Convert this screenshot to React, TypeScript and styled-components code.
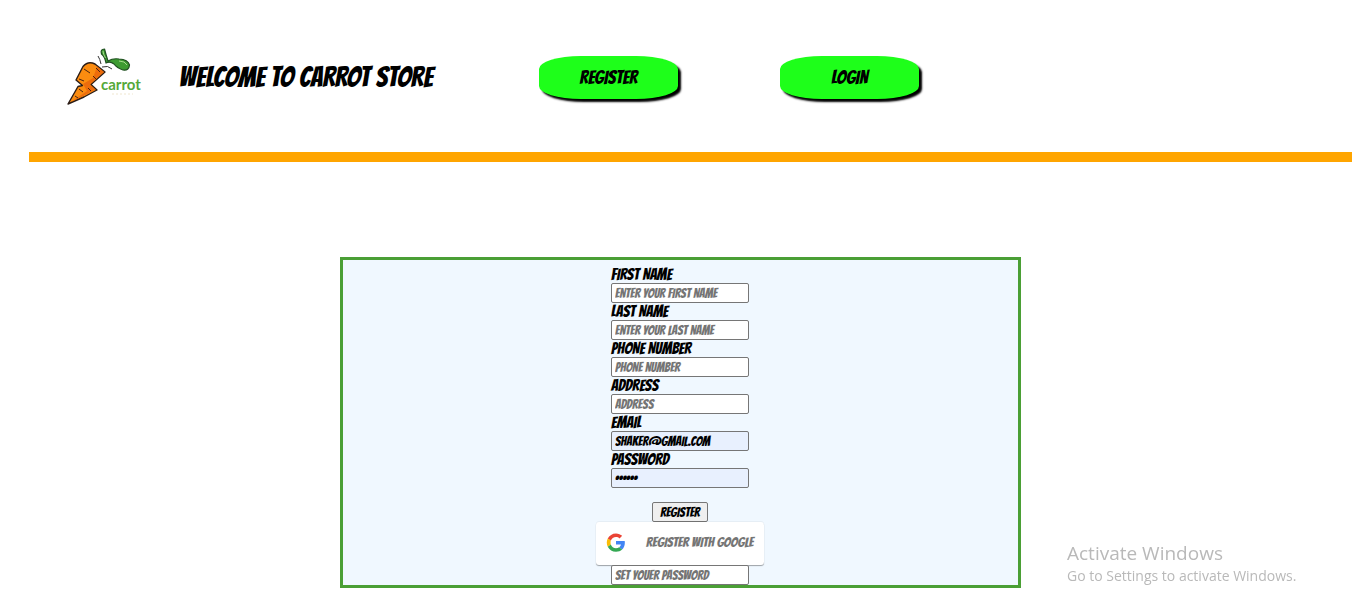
import React from 'react';
import styled, { createGlobalStyle } from 'styled-components';

const GlobalStyle = createGlobalStyle`
  * { box-sizing: border-box; }
  body {
    margin: 0;
    background: #fff;
    color: #000;
    font-family: Bangers, "Liberation Sans Narrow", "Liberation Sans", sans-serif;
    font-weight: 400;
  }
  button, input { font: inherit; }
`;

const Header = styled.header`
  display: flex;
  align-items: center;
  height: 162px;
  margin: 0 7px 0 29px;
  padding: 0 38px;
  border-bottom: 10px solid #ffa500;
`;

const Logo = styled.svg`
  flex: none;
  width: 76px;
  height: 60px;
  margin-right: 36px;
`;

const Title = styled.h1`
  flex: none;
  width: 360px;
  margin: 0;
  padding-top: 2px;
  font-size: 28px;
  font-weight: 400;
  line-height: 34px;
  white-space: nowrap;
`;

const Nav = styled.nav`
  display: flex;
  gap: 102px;
  padding-top: 2px;
`;

const NavButton = styled.button`
  width: 139px;
  height: 43px;
  padding: 0;
  border: 0;
  border-radius: 30%;
  background: #1eff1a;
  box-shadow: 3px 3px 2px 0 #000;
  color: #000;
  font-size: 19px;
  line-height: 20px;
`;

const Main = styled.main`
  padding-left: 1px;
`;

const Form = styled.form`
  display: flex;
  flex-direction: column;
  align-items: center;
  width: calc(50% + 2px);
  min-width: 300px;
  margin: 95px auto 0;
  padding-top: 6px;
  border: 3px solid #4a9f35;
  background: #f0f8ff;
`;

const Field = styled.div`
  width: 138px;
`;

const Label = styled.label`
  display: block;
  font-size: 16px;
  line-height: 17px;
  white-space: nowrap;
`;

const Input = styled.input<{ $filled?: boolean }>`
  display: block;
  width: 138px;
  height: 20px;
  padding: 0 3px;
  border: 1px solid #767676;
  border-radius: 2px;
  background: ${({ $filled }) => ($filled ? '#e8f0fe' : '#fff')};
  color: #000;
  font-size: 13px;
  &::placeholder { color: #757575; }
`;

const Submit = styled.button`
  width: 56px;
  height: 20px;
  margin-top: 14px;
  padding: 0;
  border: 1px solid #767676;
  border-radius: 2px;
  background: #efefef;
  color: #000;
  font-size: 13px;
`;

const GoogleButton = styled.button`
  display: flex;
  align-items: center;
  gap: 20px;
  width: 168px;
  height: 43px;
  padding: 0 10px 2px;
  border: 0;
  border-radius: 3px;
  background: #fff;
  box-shadow: 0 -1px 0 rgba(0, 0, 0, 0.04), 0 1px 1px rgba(0, 0, 0, 0.35);
  color: #757575;
  font-size: 14px;
  white-space: nowrap;
`;

const Watermark = styled.aside`
  position: fixed;
  right: 55px;
  bottom: 27px;
  width: 237px;
  color: #b9b9b9;
  font-family: "Segoe UI", "Open Sans", "Noto Sans", sans-serif;
  font-size: 14px;
  line-height: 20px;
  white-space: nowrap;
`;

const WatermarkTitle = styled.div`
  font-size: 19px;
  line-height: 26px;
`;

function CarrotLogo() {
  return (
    <Logo viewBox="0 -1 76 60" role="img" aria-label="carrot">
      <path d="M1 57 L11 39.5 L15.5 38.5 L9 33 L16 19.5 Q21 13.5 28 17 L38 25 L24 37.5 L30 43 L17 50 Z" fill="#fb8c10" stroke="#2b1c16" strokeWidth="1.4" strokeLinejoin="round" />
      <path d="M30 19.5 L37 25 L23 37.5 L28.5 42.5 L16 49 L4 55 L20 44 L16 37 L26 31 Z" fill="#ec6c0c" />
      <path d="M17 22l6 4M26 29l3 3M29 21l4 4M12 32l5 2M12 42l4 3M21 41l3 3M8 49l3 2" stroke="#4a2410" strokeWidth="1" />
      <path d="M39 16 Q38 10 34.5 7 Q33 2 37.5 2 Q39 8 41 14 Q46 11 52 12 Q61 12.5 62.5 18 Q62 24 56 23 Q50 21 47 17 Q43 14 39 16 Z" fill="#3d9b31" stroke="#1f4f20" strokeWidth="1.2" strokeLinejoin="round" />
      <path d="M36 4Q36 7 38.5 11M52 14Q58 14 60 18" fill="none" stroke="#a4d98a" strokeWidth="1" />
      <path d="M31 9Q33 12 34 17M35 20Q41 18 45 22" fill="none" stroke="#333" strokeWidth="1" />
      <text x="34" y="43" fill="#55a83a" fontFamily="Lato, sans-serif" fontWeight="700" fontSize="15">carrot</text>
      <path d="M45 47h21" stroke="#efe6cf" strokeWidth="1" strokeDasharray="2 2" />
    </Logo>
  );
}

function GoogleIcon() {
  return (
    <svg width="20" height="20" viewBox="-2 -1 52 52" aria-hidden="true">
      <path fill="#EA4335" d="M24 9.5c3.54 0 6.71 1.22 9.21 3.6l6.85-6.85C35.9 2.38 30.47 0 24 0 14.62 0 6.51 5.38 2.56 13.22l7.98 6.19C12.43 13.72 17.74 9.5 24 9.5z" />
      <path fill="#4285F4" d="M46.98 24.55c0-1.57-.15-3.09-.38-4.55H24v9.02h12.94c-.58 2.96-2.26 5.48-4.78 7.18l7.73 6c4.51-4.18 7.09-10.36 7.09-17.65z" />
      <path fill="#FBBC05" d="M10.53 28.59c-.48-1.45-.76-2.99-.76-4.59s.27-3.14.76-4.59l-7.98-6.19C.92 16.46 0 20.12 0 24c0 3.88.92 7.54 2.56 10.78l7.97-6.19z" />
      <path fill="#34A853" d="M24 48c6.48 0 11.93-2.13 15.89-5.81l-7.73-6c-2.15 1.45-4.92 2.3-8.16 2.3-6.26 0-11.57-4.22-13.47-9.91l-7.98 6.19C6.51 42.62 14.62 48 24 48z" />
    </svg>
  );
}

const fields = [
  { id: 'first', label: 'FIRST NAME', type: 'text', placeholder: 'ENTER YOUR FIRST NAME' },
  { id: 'last', label: 'LAST NAME', type: 'text', placeholder: 'ENTER YOUR LAST NAME' },
  { id: 'phone', label: 'PHONE NUMBER', type: 'text', placeholder: 'PHONE NUMBER' },
  { id: 'address', label: 'ADDRESS', type: 'text', placeholder: 'ADDRESS' },
  { id: 'email', label: 'EMAIL', type: 'email', value: 'SHAKER@GMAIL.COM' },
  { id: 'password', label: 'PASSWORD', type: 'password', value: 'carrot' },
];

export default function App() {
  return (
    <>
      <GlobalStyle />
      <Header>
        <CarrotLogo />
        <Title>WELCOME TO CARROT STORE</Title>
        <Nav>
          <NavButton type="button">REGISTER</NavButton>
          <NavButton type="button">LOGIN</NavButton>
        </Nav>
      </Header>
      <Main>
        <Form onSubmit={(e) => e.preventDefault()}>
          {fields.map((f) => (
            <Field key={f.id}>
              <Label htmlFor={f.id}>{f.label}</Label>
              <Input id={f.id} type={f.type} placeholder={f.placeholder} defaultValue={f.value} $filled={!!f.value} />
            </Field>
          ))}
          <Submit type="submit">REGISTER</Submit>
          <GoogleButton type="button">
            <GoogleIcon />
            REGISTER WITH GOOGLE
          </GoogleButton>
          <Input type="password" aria-label="Set password" placeholder="SET YOUER PASSWORD" />
        </Form>
      </Main>
      <Watermark>
        <WatermarkTitle>Activate Windows</WatermarkTitle>
        Go to Settings to activate Windows.
      </Watermark>
    </>
  );
}
